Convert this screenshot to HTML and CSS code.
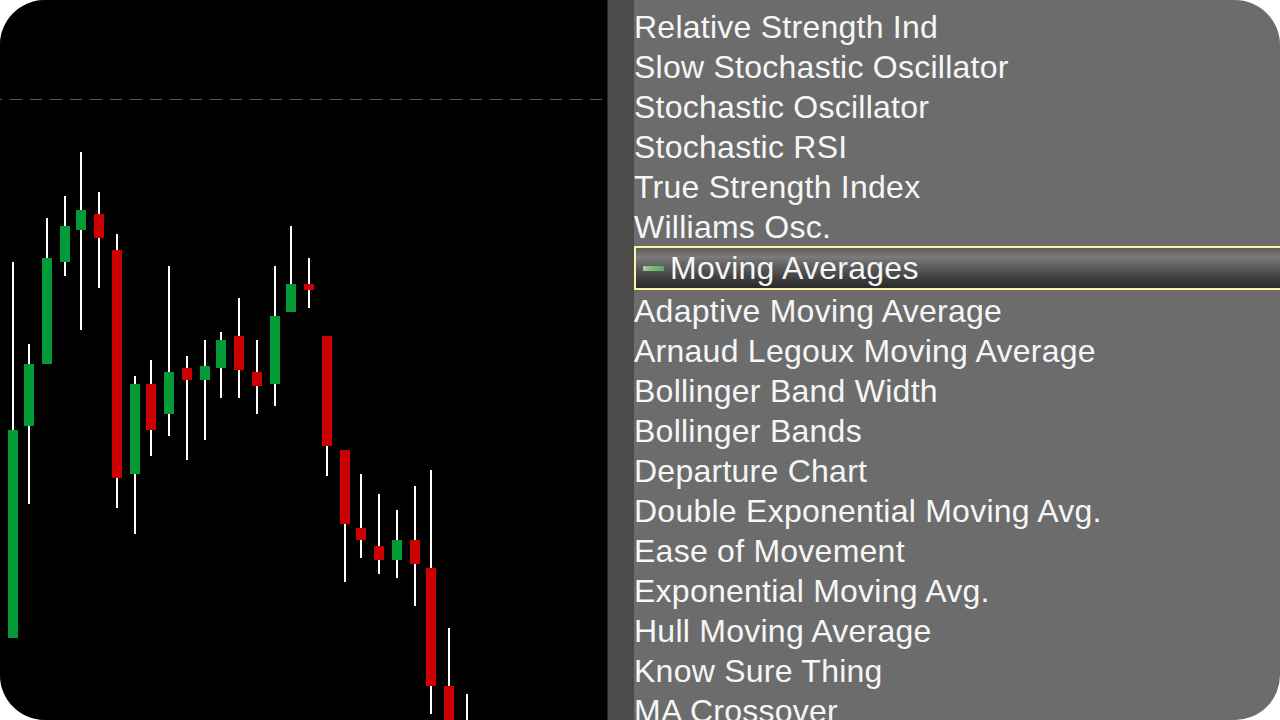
FILE: index.html
```html
<!DOCTYPE html>
<html lang="en">
<head>
  <meta charset="UTF-8" />
  <meta name="viewport" content="width=device-width, initial-scale=1.0"/>
  <title>Indicators</title>
  <link rel="stylesheet" href="styles.css">
</head>
<body>

  <div class="frame">
    <div class="chart">
      <svg width="607" height="720" viewBox="0 0 607 720">
        <line class="guide" x1="0" y1="99.5" x2="604" y2="99.5" />
        <g class="wicks">
          <rect x="12" y="262" width="2" height="376" />
          <rect x="28" y="344" width="2" height="160" />
          <rect x="46" y="218" width="2" height="146" />
          <rect x="64" y="196" width="2" height="80" />
          <rect x="80" y="152" width="2" height="178" />
          <rect x="98" y="192" width="2" height="96" />
          <rect x="116" y="234" width="2" height="274" />
          <rect x="134" y="376" width="2" height="158" />
          <rect x="150" y="360" width="2" height="96" />
          <rect x="168" y="266" width="2" height="170" />
          <rect x="186" y="356" width="2" height="104" />
          <rect x="204" y="340" width="2" height="100" />
          <rect x="220" y="332" width="2" height="66" />
          <rect x="238" y="298" width="2" height="100" />
          <rect x="256" y="340" width="2" height="74" />
          <rect x="274" y="266" width="2" height="140" />
          <rect x="290" y="226" width="2" height="86" />
          <rect x="308" y="258" width="2" height="50" />
          <rect x="326" y="336" width="2" height="140" />
          <rect x="344" y="450" width="2" height="132" />
          <rect x="360" y="474" width="2" height="84" />
          <rect x="378" y="494" width="2" height="80" />
          <rect x="396" y="510" width="2" height="68" />
          <rect x="414" y="486" width="2" height="120" />
          <rect x="430" y="470" width="2" height="244" />
          <rect x="448" y="628" width="2" height="92" />
          <rect x="466" y="694" width="2" height="26" />
        </g>
        <g class="up">
          <rect x="8" y="430" width="10" height="208" />
          <rect x="24" y="364" width="10" height="62" />
          <rect x="42" y="258" width="10" height="106" />
          <rect x="60" y="226" width="10" height="36" />
          <rect x="76" y="210" width="10" height="20" />
          <rect x="130" y="384" width="10" height="90" />
          <rect x="164" y="372" width="10" height="42" />
          <rect x="200" y="366" width="10" height="14" />
          <rect x="216" y="340" width="10" height="28" />
          <rect x="270" y="316" width="10" height="68" />
          <rect x="286" y="284" width="10" height="28" />
          <rect x="392" y="540" width="10" height="20" />
        </g>
        <g class="down">
          <rect x="94" y="214" width="10" height="24" />
          <rect x="112" y="250" width="10" height="228" />
          <rect x="146" y="384" width="10" height="46" />
          <rect x="182" y="368" width="10" height="12" />
          <rect x="234" y="336" width="10" height="34" />
          <rect x="252" y="372" width="10" height="14" />
          <rect x="304" y="284" width="10" height="6" />
          <rect x="322" y="336" width="10" height="110" />
          <rect x="340" y="450" width="10" height="74" />
          <rect x="356" y="528" width="10" height="12" />
          <rect x="374" y="546" width="10" height="14" />
          <rect x="410" y="540" width="10" height="24" />
          <rect x="426" y="568" width="10" height="118" />
          <rect x="444" y="686" width="10" height="40" />
        </g>
      </svg>
    </div>

    <div class="divider"></div>

    <ul class="indicators">
      <li>Relative Strength Ind</li>
      <li>Slow Stochastic Oscillator</li>
      <li>Stochastic Oscillator</li>
      <li>Stochastic RSI</li>
      <li>True Strength Index</li>
      <li>Williams Osc.</li>
      <li class="group"><span class="collapse"></span>Moving Averages</li>
      <li>Adaptive Moving Average</li>
      <li>Arnaud Legoux Moving Average</li>
      <li>Bollinger Band Width</li>
      <li>Bollinger Bands</li>
      <li>Departure Chart</li>
      <li>Double Exponential Moving Avg.</li>
      <li>Ease of Movement</li>
      <li>Exponential Moving Avg.</li>
      <li>Hull Moving Average</li>
      <li>Know Sure Thing</li>
      <li>MA Crossover</li>
    </ul>
  </div>

</body>
</html>
```

FILE: styles.css
```css
* {
  box-sizing: border-box;
}

body {
  margin: 0;
  padding: 0;
  background-color: #fff;
}

.frame {
  width: 1280px;
  height: 720px;
  border-radius: 45px;
  overflow: hidden;
  display: flex;
  background-color: #6c6c6d;
}

.chart {
  width: 607px;
  flex: none;
  background-color: #000;
}

.chart svg {
  display: block;
}

.guide {
  stroke: #5c5c5c;
  stroke-width: 1;
  stroke-dasharray: 12 8;
  stroke-dashoffset: 10;
}

.wicks rect {
  fill: #fff;
}

.up rect {
  fill: #039a38;
}

.down rect {
  fill: #cc0000;
}

.divider {
  width: 27px;
  flex: none;
  background-color: #4b4b4b;
  border-left: 1px solid #2a2a2a;
}

.indicators {
  flex: 1;
  list-style: none;
  margin: 0;
  padding: 7px 0 0 0;
  font-family: "Liberation Sans", Arial, sans-serif;
  font-size: 32px;
  line-height: 40px;
  letter-spacing: 0.25px;
  color: #f6f6f6;
  white-space: nowrap;
}

.indicators li {
  height: 40px;
}

.indicators .group {
  height: 44px;
  margin-top: -1px;
  margin-bottom: 1px;
  display: flex;
  align-items: center;
  gap: 6px;
  padding-left: 7px;
  border: 2px solid #fcf1a8;
  border-right: none;
  background: linear-gradient(#5c5c5c 0%, #7b7b7b 22%, #5a5a5a 50%, #3a3a3a 80%, #2b2b2b 100%);
}

.collapse {
  width: 21px;
  height: 5px;
  border-radius: 1px;
  background: linear-gradient(to right, #b4c8b4, #7cc07c 35%, #5aa95a);
}
```
